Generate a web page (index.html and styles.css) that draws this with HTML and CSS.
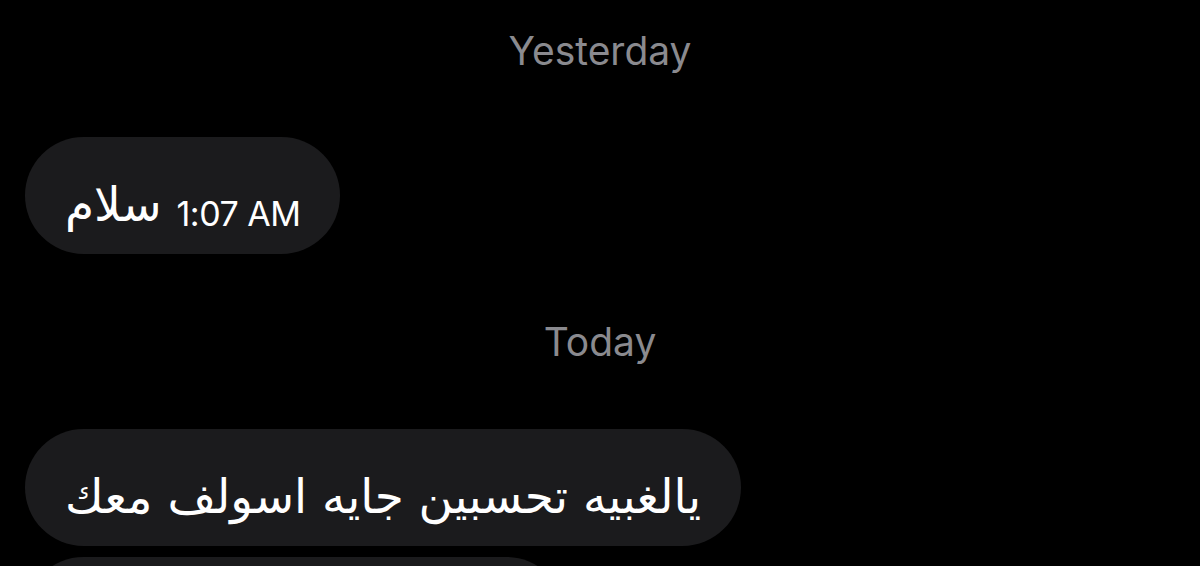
FILE: index.html
```html
<!DOCTYPE html>
<html lang="ar">
  <head>
    <meta charset="UTF-8" />
    <meta name="viewport" content="width=device-width, initial-scale=1.0" />
    <title>Chat</title>
    <link rel="stylesheet" href="styles.css">
  </head>
  <body>
    <div class="chat">
      <div class="day day-first">Yesterday</div>
      <div class="bubble">
        <span class="msg" dir="rtl">سلام</span>
        <span class="time">1:07 AM</span>
      </div>
      <div class="day">Today</div>
      <div class="bubble">
        <span class="msg" dir="rtl">يالغبيه تحسبين جايه اسولف معك</span>
      </div>
      <div class="bubble bubble-cut"></div>
    </div>
  </body>
</html>
```

FILE: styles.css
```css
body {
  margin: 0;
  background: #000;
  font-family: Inter, "Liberation Sans", sans-serif;
  overflow: hidden;
}
.chat {
  display: flex;
  flex-direction: column;
  align-items: flex-start;
  padding: 0 25px;
}
.day {
  align-self: stretch;
  text-align: center;
  color: #8a8a8f;
  font-size: 39px;
  line-height: 48px;
  margin: 64px 0 63px;
}
.day-first {
  margin-top: 27px;
  margin-bottom: 62px;
}
.bubble {
  display: flex;
  align-items: center;
  gap: 15px;
  height: 117px;
  padding: 0 40px;
  box-sizing: border-box;
  background: #1b1b1d;
  border-radius: 59px;
  color: #fff;
}
.msg {
  font-family: "DejaVu Sans", sans-serif;
  font-size: 47px;
  margin-top: 18px;
}
.time {
  font-size: 34px;
  letter-spacing: -0.5px;
  margin-top: 36px;
}
.bubble + .bubble {
  margin-top: 11px;
}
.bubble-cut {
  width: 540px;
}
```
